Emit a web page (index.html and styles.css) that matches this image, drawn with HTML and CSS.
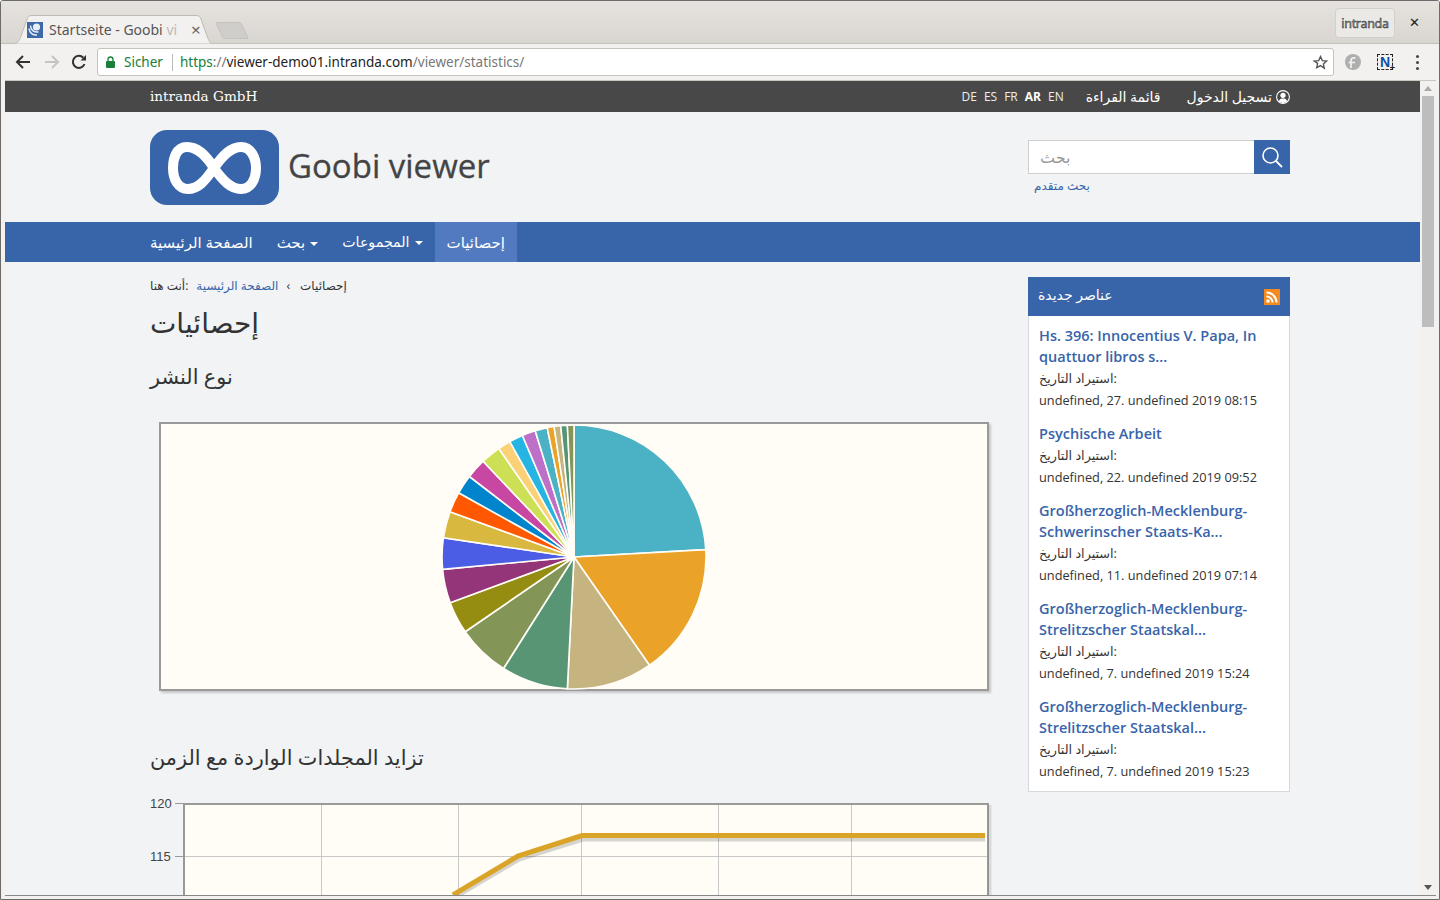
FILE: index.html
```html
<!DOCTYPE html>
<html lang="ar">
<head>
  <meta charset="UTF-8" />
  <title>Startseite - Goobi viewer</title>
  <link rel="stylesheet" href="styles.css">
</head>
<body>
<div class="window">
  <div class="tabstrip">
    <div class="tab">
      <svg class="tab-bg" width="199" height="29" viewBox="0 0 199 29"><path d="M0 28.5C5 28.5 6 26 8 21L14 4C15 1.500 16 .5 19 .5H183C186 .5 187 1.500 188 4L194 21C196 26 197 28.500 199 28.500" fill="#f3f1ef" stroke="#bdb9b3"/></svg>
      <svg class="favicon" width="16" height="16" viewBox="0 0 16 16"><rect width="16" height="16" fill="#3d69a8"/><circle cx="9.500" cy="5" r="3.600" fill="#e8eef6"/><path d="M2 6.500C2.500 11 6 13.500 10 13M3.500 3.500C3.500 8 7 10.500 11.500 10" fill="none" stroke="#e8eef6" stroke-width="1.500"/></svg>
      <span class="tab-title">Startseite - Goobi <span class="tab-fade">vi</span></span>
      <span class="tab-close">×</span>
    </div>
    <div class="newtab"></div>
    <div class="user-badge">intranda</div>
    <div class="win-close">✕</div>
  </div>

  <div class="toolbar">
    <svg class="nav-icon" width="16" height="16" viewBox="0 0 16 16"><path d="M15 8H2M8 2L2 8l6 6" fill="none" stroke="#333" stroke-width="2"/></svg>
    <svg class="nav-icon fwd" width="16" height="16" viewBox="0 0 16 16"><path d="M1 8h13M8 2l6 6-6 6" fill="none" stroke="#c4c4c4" stroke-width="2"/></svg>
    <svg class="nav-icon reload" width="16" height="16" viewBox="0 0 16 16"><path d="M13.500 10A6 6 0 1 1 12.300 3.800" fill="none" stroke="#333" stroke-width="2"/><path d="M9.500 6.500H15V1z" fill="#333"/></svg>
    <div class="omnibox">
      <svg width="9" height="12" viewBox="0 0 9 12"><path d="M2 5V3.500a2.500 2.500 0 0 1 5 0V5" fill="none" stroke="#188038" stroke-width="1.300"/><rect y="5" width="9" height="7" rx="1" fill="#188038"/></svg>
      <span class="secure">Sicher</span>
      <span class="omni-div"></span>
      <span class="url"><span class="url-scheme">https</span><span class="url-dim">://</span>viewer-demo01.intranda.com<span class="url-dim">/viewer/statistics/</span></span>
      <svg class="star" width="15" height="15" viewBox="0 0 24 24"><path d="M12 2.500l2.900 6.400 7 .7-5.300 4.700 1.500 6.900L12 17l-6.100 3.200 1.500-6.900L2.100 9.600l7-.7z" fill="none" stroke="#555" stroke-width="2.200"/></svg>
    </div>
    <svg class="ext-fedora" width="16" height="16" viewBox="0 0 16 16"><circle cx="8" cy="8" r="8" fill="#aeaeae"/><path d="M6 14V6.500C6 4.500 7.500 3.500 10.500 4M3.500 8.500H10" fill="none" stroke="#f3f1ef" stroke-width="1.700"/></svg>
    <div class="ext-n">N<span class="ext-plus">+</span></div>
    <div class="menu-dots"><i></i><i></i><i></i></div>
  </div>

  <div class="viewport">
    <div class="page">
      <div class="topbar">
        <div class="wrap topbar-in">
          <span class="company">intranda GmbH</span>
          <div class="top-links">
            <span class="langs"><a>DE</a><a>ES</a><a>FR</a><a class="on">AR</a><a>EN</a></span>
            <a class="top-link">قائمة القراءة</a>
            <a class="top-link login">تسجيل الدخول
              <svg width="14" height="14" viewBox="0 0 14 14"><circle cx="7" cy="7" r="6.400" fill="none" stroke="#fff" stroke-width="1.100"/><circle cx="7" cy="5.300" r="2.600" fill="#fff"/><path d="M2.700 11.300C3.500 9 5 8.500 7 8.500s3.500.5 4.300 2.800A6 6 0 0 1 2.700 11.300z" fill="#fff"/></svg>
            </a>
          </div>
        </div>
      </div>

      <header class="wrap site-head">
        <div class="brand">
          <svg class="logo" width="129" height="75" viewBox="0 0 129 75"><rect width="129" height="75" rx="17" fill="#3864a9"/><path d="M64 38C55 24 47 17 37 17C26 17 23 29 23 38C23 49 28 59 38 59C48 59 55 51 64 38C73 25 81 17 91 17C101 17 106 28 106 38C106 49 101 59 91 59C81 59 73 51 64 38Z" fill="none" stroke="#fff" stroke-width="10"/></svg>
          <span class="brand-name">Goobi viewer</span>
        </div>
        <div class="search">
          <div class="search-row">
            <input class="search-input" type="text" placeholder="بحث">
            <button class="search-btn"><svg width="22" height="22" viewBox="0 0 22 22"><circle cx="9.500" cy="9.500" r="7.500" fill="none" stroke="#fff" stroke-width="1.600"/><path d="M15 15l6 6" stroke="#fff" stroke-width="1.800"/></svg></button>
          </div>
          <a class="adv-search">بحث متقدم</a>
        </div>
      </header>

      <nav class="mainnav">
        <ul class="wrap nav-list">
          <li><a>الصفحة الرئيسية</a></li>
          <li><a>بحث<i class="caret"></i></a></li>
          <li class="nav-coll"><a>المجموعات<i class="caret"></i></a></li>
          <li class="active"><a>إحصائيات</a></li>
        </ul>
      </nav>

      <div class="wrap content">
        <main class="main-col">
          <div class="crumbs">أنت هنا:<a>الصفحة الرئيسية</a><span class="sep">‹</span><span>إحصائيات</span></div>
          <h1>إحصائيات</h1>
          <h2>نوع النشر</h2>
          <div class="plot pie-plot">
            <svg class="pie" width="266" height="266" viewBox="-132 -132 264 264">
              <g stroke="#fffdf6" stroke-width="1.600">
                <path fill="#4bb2c5" d="M0 0L0 -131A131 131 0 0 1 130.800 -7.300Z"/>
                <path fill="#eaa228" d="M0 0L130.800 -7.300A131 131 0 0 1 74.900 107.400Z"/>
                <path fill="#c5b47f" d="M0 0L74.900 107.400A131 131 0 0 1 -6.600 130.800Z"/>
                <path fill="#579575" d="M0 0L-6.600 130.800A131 131 0 0 1 -70 110.700Z"/>
                <path fill="#839557" d="M0 0L-70 110.700A131 131 0 0 1 -108 74.200Z"/>
                <path fill="#958c12" d="M0 0L-108 74.200A131 131 0 0 1 -122.900 45.400Z"/>
                <path fill="#953579" d="M0 0L-122.900 45.400A131 131 0 0 1 -130.400 12.300Z"/>
                <path fill="#4b5de4" d="M0 0L-130.400 12.300A131 131 0 0 1 -129.600 -19.100Z"/>
                <path fill="#d8b83f" d="M0 0L-129.600 -19.100A131 131 0 0 1 -123.100 -44.800Z"/>
                <path fill="#ff5800" d="M0 0L-123.100 -44.800A131 131 0 0 1 -114.500 -63.700Z"/>
                <path fill="#0085cc" d="M0 0L-114.500 -63.700A131 131 0 0 1 -103.800 -79.900Z"/>
                <path fill="#c747a3" d="M0 0L-103.800 -79.900A131 131 0 0 1 -90.200 -95Z"/>
                <path fill="#cddf54" d="M0 0L-90.200 -95A131 131 0 0 1 -74.600 -107.700Z"/>
                <path fill="#fbd178" d="M0 0L-74.600 -107.700A131 131 0 0 1 -63.700 -114.500Z"/>
                <path fill="#26b4e3" d="M0 0L-63.700 -114.500A131 131 0 0 1 -51.200 -120.600Z"/>
                <path fill="#bd70c7" d="M0 0L-51.200 -120.600A131 131 0 0 1 -38.500 -125.200Z"/>
                <path fill="#4bb2c5" d="M0 0L-38.500 -125.200A131 131 0 0 1 -26.600 -128.300Z"/>
                <path fill="#eaa228" d="M0 0L-26.600 -128.300A131 131 0 0 1 -19.800 -129.500Z"/>
                <path fill="#c5b47f" d="M0 0L-19.800 -129.500A131 131 0 0 1 -13.200 -130.300Z"/>
                <path fill="#579575" d="M0 0L-13.200 -130.300A131 131 0 0 1 -6.600 -130.800Z"/>
                <path fill="#839557" d="M0 0L-6.600 -130.800A131 131 0 0 1 0 -131Z"/>
              </g>
            </svg>
          </div>
          <h2 class="h2-growth">تزايد المجلدات الواردة مع الزمن</h2>
          <svg class="line-plot" width="845" height="134" viewBox="0 -4 845 134">
            <rect x="34" y="5" width="804" height="130" fill="#fffdf6"/>
            <g stroke="#c8c8c8" stroke-width="1">
              <path d="M171.500 5V130M308.500 5V130M431.500 5V130M568.500 5V130M701.500 5V130M34 58.500H838"/>
            </g>
            <path d="M303 100L369 61 433 41H835" fill="none" stroke="#000" stroke-opacity=".16" stroke-width="5"/>
            <path d="M303 97L368 58 432 37.500H835" fill="none" stroke="#d9a428" stroke-width="5"/>
            <path d="M35 6H838V130" fill="none" stroke="#999" stroke-width="2"/>
            <path d="M34 5V130" fill="none" stroke="#999" stroke-width="2"/>
            <path d="M840 7V130" fill="none" stroke="#000" stroke-opacity=".1" stroke-width="3"/>
            <path d="M25 5.500H34M25 58.500H34" stroke="#999" stroke-width="1"/>
            <text class="tick" x="0" y="10">120</text>
            <text class="tick" x="0" y="63">115</text>
          </svg>
        </main>

        <aside class="side">
          <div class="side-head">
            <span class="side-label">عناصر جديدة</span>
            <svg width="16" height="16" viewBox="0 0 16 16"><rect width="16" height="16" fill="#f58a1f"/><circle cx="4" cy="12" r="1.800" fill="#fff"/><path d="M2.500 7.500a6 6 0 0 1 6 6M2.500 3.500a10 10 0 0 1 10 10" fill="none" stroke="#fff" stroke-width="2"/></svg>
          </div>
          <div class="side-body">
            <div class="item">
              <a class="item-title">Hs. 396: Innocentius V. Papa, In quattuor libros s...</a>
              <div class="item-meta">استيراد التاريخ:</div>
              <div class="item-meta">undefined, 27. undefined 2019 08:15</div>
            </div>
            <div class="item">
              <a class="item-title">Psychische Arbeit</a>
              <div class="item-meta">استيراد التاريخ:</div>
              <div class="item-meta">undefined, 22. undefined 2019 09:52</div>
            </div>
            <div class="item">
              <a class="item-title">Großherzoglich-Mecklenburg-Schwerinscher Staats-Ka...</a>
              <div class="item-meta">استيراد التاريخ:</div>
              <div class="item-meta">undefined, 11. undefined 2019 07:14</div>
            </div>
            <div class="item">
              <a class="item-title">Großherzoglich-Mecklenburg-Strelitzscher Staatskal...</a>
              <div class="item-meta">استيراد التاريخ:</div>
              <div class="item-meta">undefined, 7. undefined 2019 15:24</div>
            </div>
            <div class="item">
              <a class="item-title">Großherzoglich-Mecklenburg-Strelitzscher Staatskal...</a>
              <div class="item-meta">استيراد التاريخ:</div>
              <div class="item-meta">undefined, 7. undefined 2019 15:23</div>
            </div>
          </div>
        </aside>
      </div>
    </div>

    <div class="scrollbar">
      <span class="arrow-up"></span>
      <div class="thumb"></div>
      <span class="arrow-down"></span>
    </div>
  </div>
</div>
</body>
</html>
```

FILE: styles.css
```css
* {
  box-sizing: border-box;
}
html, body {
  margin: 0;
  padding: 0;
  height: 900px;
  overflow: hidden;
}
body {
  font-family: "Open Sans", "DejaVu Sans", sans-serif;
  color: #333;
}
a {
  color: inherit;
  text-decoration: none;
}

/* browser frame */
.window {
  width: 1440px;
  height: 900px;
  overflow: hidden;
  display: flex;
  flex-direction: column;
  background: #f3f1ef;
  border: 1px solid #6b6b6b;
  border-radius: 3px 3px 0 0;
}
.tabstrip {
  height: 43px;
  flex: none;
  display: flex;
  align-items: flex-end;
  padding-left: 12px;
  background: linear-gradient(#e6e3df, #d9d6d1);
  border-bottom: 1px solid #c3bfb9;
}
.tab {
  position: relative;
  width: 199px;
  height: 29px;
  margin-bottom: -1px;
  padding-left: 14px;
  display: flex;
  align-items: center;
  font-family: "Noto Sans", sans-serif;
  font-size: 14px;
  color: #555;
}
.tab-bg {
  position: absolute;
  left: 0;
  top: 0;
}
.favicon, .tab-title, .tab-close {
  position: relative;
}
.tab-title {
  margin-left: 6px;
  width: 133px;
  white-space: nowrap;
}
.tab-fade {
  color: #bbb;
}
.tab-close {
  margin-left: 9px;
  font-size: 17px;
  color: #666;
}
.newtab {
  width: 26px;
  height: 17px;
  margin: 0 0 4px 7px;
  background: #d0cecb;
  border: 1px solid #c4c1bc;
  border-radius: 2px;
  transform: skewX(25deg);
}
.user-badge {
  width: 60px;
  height: 30px;
  margin: 0 0 5px auto;
  display: flex;
  align-items: center;
  justify-content: center;
  background: #ebe9e6;
  border: 1px solid #d3d0cb;
  border-radius: 4px;
  font-family: "Noto Sans", sans-serif;
  font-size: 12.500px;
  letter-spacing: -.3px;
  color: #999;
  -webkit-text-stroke: .5px #333;
  text-shadow: 0 0 2px #fff;
}
.win-close {
  width: 44px;
  padding-right: 5px;
  margin-bottom: 13px;
  text-align: center;
  font-size: 13px;
  color: #222;
  font-family: "DejaVu Sans", sans-serif;
  font-weight: bold;
}
.toolbar {
  height: 36px;
  flex: none;
  display: flex;
  align-items: center;
  padding-left: 14px;
}
.nav-icon {
  flex: none;
}
.nav-icon.fwd {
  margin-left: 13px;
}
.nav-icon.reload {
  margin-left: 11px;
}
.omnibox {
  width: 1237px;
  height: 28px;
  margin-left: 10px;
  padding: 0 5px 0 8px;
  display: flex;
  align-items: center;
  background: #fff;
  border: 1px solid #c6c2bc;
  border-radius: 3px;
  font-family: "Noto Sans", sans-serif;
  font-size: 13.500px;
}
.secure {
  margin-left: 9px;
  color: #188038;
}
.omni-div {
  width: 1px;
  height: 17px;
  margin: 0 7px 0 9px;
  background: #bbb;
}
.url {
  color: #222;
}
.url-scheme {
  color: #188038;
}
.url-dim {
  color: #777;
}
.star {
  margin-left: auto;
}
.ext-fedora {
  margin-left: 11px;
}
.ext-n {
  position: relative;
  width: 16px;
  height: 16px;
  margin-left: 16px;
  border: 1px dashed #222;
  display: flex;
  align-items: center;
  justify-content: center;
  font-family: "Liberation Sans", sans-serif;
  font-size: 14px;
  font-weight: bold;
  color: #0f4fa8;
}
.ext-plus {
  position: absolute;
  right: -3px;
  bottom: -4px;
  font-size: 9px;
  color: #222;
}
.menu-dots {
  margin-left: 23px;
  display: flex;
  flex-direction: column;
  gap: 3px;
}
.menu-dots i {
  width: 3px;
  height: 3px;
  background: #444;
  border-radius: 50%;
}

/* page */
.viewport {
  height: 816px;
  flex: none;
  margin: 0 3px 0 4px;
  display: flex;
  border-top: 1px solid #c9c5bf;
  border-bottom: 1px solid #888;
}
.page {
  width: 1415px;
  flex: none;
  background: #f1f3f5;
  overflow: hidden;
}
.wrap {
  width: 1140px;
  margin-left: 145px;
}
.topbar {
  height: 31px;
  background: #484848;
  color: #fff;
}
.topbar-in {
  height: 31px;
  display: flex;
  align-items: center;
  justify-content: space-between;
}
.company {
  padding-bottom: 2px;
  font-family: "DejaVu Serif", serif;
  font-size: 13.600px;
}
.top-links {
  display: flex;
  align-items: center;
  font-size: 14px;
}
.langs {
  display: flex;
  gap: 7px;
  font-size: 12px;
  margin-right: 22px;
}
.langs a {
  color: #eee;
}
.langs .on {
  font-weight: 700;
  color: #fff;
}
.top-link {
  display: flex;
  align-items: center;
  gap: 4px;
}
.login {
  margin-left: 26px;
}
.site-head {
  height: 110px;
  display: flex;
  justify-content: space-between;
  padding-top: 18px;
}
.brand {
  display: flex;
  align-items: center;
  gap: 9px;
  height: 75px;
}
.brand-name {
  padding-bottom: 4px;
  font-size: 33px;
  color: #444;
  -webkit-text-stroke: .3px #444;
}
.search {
  width: 262px;
  padding-top: 10px;
}
.search-row {
  display: flex;
  height: 34px;
}
.search-input {
  width: 226px;
  height: 34px;
  padding: 0 11px;
  border: 1px solid #cfcfcf;
  border-right: 0;
  border-radius: 0;
  background: #fff;
  font-family: "DejaVu Sans", sans-serif;
  font-size: 16px;
  outline: 0;
}
.search-input::placeholder {
  color: #999;
}
.search-btn {
  width: 36px;
  height: 34px;
  padding: 0;
  border: 0;
  background: #3864a9;
  display: flex;
  align-items: center;
  justify-content: center;
}
.adv-search {
  display: block;
  margin: 3px 0 0 6px;
  font-size: 12px;
  color: #3864a9;
}
.mainnav {
  height: 40px;
  background: #3864a9;
}
.nav-list {
  list-style: none;
  display: flex;
  height: 40px;
  padding: 0;
  margin-top: 0;
  margin-bottom: 0;
  margin-left: 133px;
  color: #fff;
  font-size: 15px;
}
.nav-list a {
  display: block;
  padding: 0 12px;
  line-height: 40px;
}
.nav-list .nav-coll {
  font-size: 14.200px;
}
.nav-list .active {
  background: #517ac0;
}
.caret {
  display: inline-block;
  margin-left: 5px;
  vertical-align: middle;
  border-top: 4px solid #fff;
  border-left: 4px solid transparent;
  border-right: 4px solid transparent;
}
.content {
  display: grid;
  grid-template-columns: 878px 262px;
}
.main-col {
  min-width: 0;
}
.crumbs {
  margin-top: 16px;
  font-size: 12px;
  line-height: 16px;
  color: #333;
  display: flex;
  white-space: pre;
}
.crumbs a {
  color: #3864a9;
  margin-left: 8px;
}
.sep {
  margin: 0 10px 0 8px;
}
h1 {
  margin: 8px 0 0;
  font-size: 28px;
  font-weight: 400;
  line-height: 40px;
  color: #333;
}
h2 {
  margin: 20px 0 0;
  font-size: 20.800px;
  font-weight: 400;
  line-height: 28px;
  color: #333;
}
.h2-growth {
  margin-top: 52px;
}
.plot {
  background: #fffdf6;
}
.pie-plot {
  width: 830px;
  height: 269px;
  margin: 32px 0 0 9px;
  display: flex;
  align-items: center;
  justify-content: center;
  border: 2px solid #999;
  box-shadow: 2px 2px 2px rgba(0,0,0,.18);
}
.pie {
  flex: none;
  margin-right: 1px;
}
.line-plot {
  display: block;
  margin-top: 23px;
}
.tick {
  font-family: "Liberation Sans", sans-serif;
  font-size: 13px;
  fill: #444;
}
.side {
  margin-top: 15px;
}
.side-head {
  height: 39px;
  padding: 0 10px;
  display: flex;
  align-items: center;
  justify-content: space-between;
  background: #3864a9;
  color: #fff;
  font-size: 14px;
}
.side-label {
  padding-bottom: 4px;
}
.side-body {
  padding: 9px 10px 9px;
  background: #fff;
  border: 1px solid #d5d8dc;
  border-top: 0;
}
.item {
  margin-bottom: 12px;
}
.item:last-child {
  margin-bottom: 0;
}
.item-title {
  display: block;
  margin-bottom: 1px;
  font-size: 14.500px;
  font-weight: 600;
  line-height: 21px;
  color: #3864a9;
}
.item-meta {
  font-size: 12.750px;
  line-height: 21.500px;
  color: #333;
}

/* scrollbar */
.scrollbar {
  width: 16px;
  flex: none;
  background: #f3f1ef;
  padding: 0 2px;
  position: relative;
}
.thumb {
  height: 231px;
  margin-top: 15px;
  background: #bdbdbd;
}
.arrow-up, .arrow-down {
  position: absolute;
  left: 4px;
  border-left: 4px solid transparent;
  border-right: 4px solid transparent;
}
.arrow-up {
  top: 5px;
  border-bottom: 5px solid #aaa;
}
.arrow-down {
  bottom: 5px;
  border-top: 5px solid #555;
}
```
